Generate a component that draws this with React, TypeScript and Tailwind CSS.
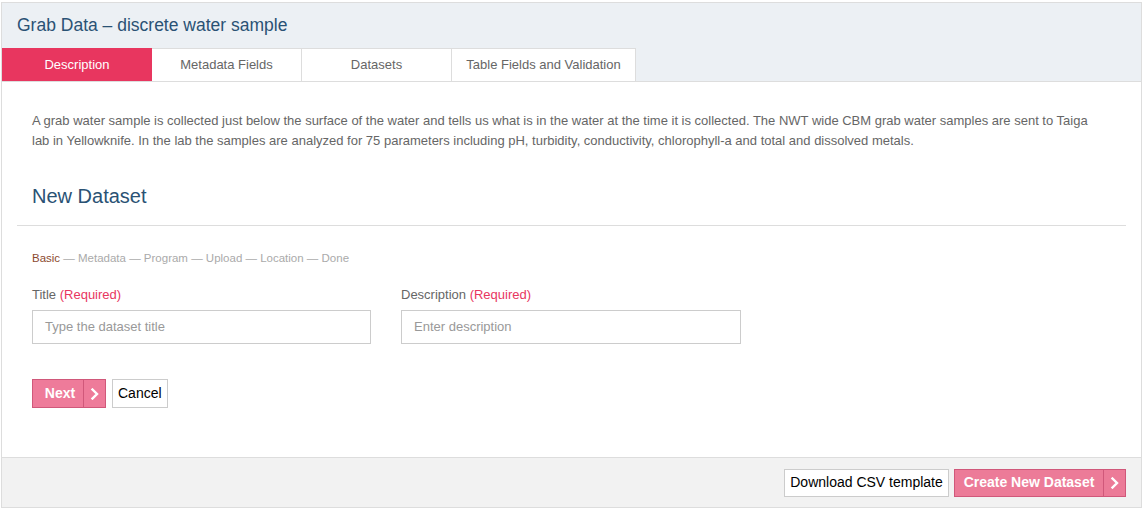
import React from "react";

const Chevron = () => (
  <svg width="10" height="12" viewBox="0 0 10 12" fill="none">
    <path d="M2.5 1.5 L7 6 L2.5 10.5" stroke="white" strokeWidth="2.4" strokeLinecap="square" />
  </svg>
);

export default function App() {
  const font = { fontFamily: '"Liberation Sans", Arial, sans-serif' };
  return (
    <div className="w-[1143px] h-[509px] bg-white pt-[2px] px-[1px]" style={font}>
      <div className="w-[1141px] h-[506px] border border-[#dddddd] flex flex-col">
        <div className="bg-[#ecf0f4] h-[79px] flex flex-col">
          <div className="h-[45px] flex items-center pl-[15px] text-[17.5px] text-[#2a5274]">
            Grab Data – discrete water sample
          </div>
          <div className="flex h-[34px] border-b border-[#dddddd]">
            <div className="w-[150px] bg-[#e8365f] text-white text-[13px] flex items-center justify-center">Description</div>
            <div className="w-[150px] bg-white border-r border-t border-[#dddddd] text-[#666] text-[13px] flex items-center justify-center">Metadata Fields</div>
            <div className="w-[150px] bg-white border-r border-t border-[#dddddd] text-[#666] text-[13px] flex items-center justify-center">Datasets</div>
            <div className="w-[184px] bg-white border-r border-t border-[#dddddd] text-[#666] text-[13px] flex items-center justify-center">Table Fields and Validation</div>
          </div>
        </div>
        <div className="flex-1 bg-white px-[15px] pt-[29px]">
          <p className="pl-[15px] pr-[35px] text-[13px] leading-[20px] text-[#666]">
            A grab water sample is collected just below the surface of the water and tells us what is in the water at the time it is collected. The NWT wide CBM grab water samples are sent to Taiga lab in Yellowknife. In the lab the samples are analyzed for 75 parameters including pH, turbidity, conductivity, chlorophyll-a and total and dissolved metals.
          </p>
          <h2 className="px-[15px] mt-[31px] text-[20px] leading-[28px] text-[#2a5274] font-normal">New Dataset</h2>
          <div className="mt-[15px] border-t border-[#dddddd]" />
          <div className="px-[15px] mt-[24px] text-[11.5px] leading-[16px] text-[#aaaaaa]">
            <span className="text-[#8b4a2f]">Basic</span> — Metadata — Program — Upload — Location — Done
          </div>
          <div className="px-[15px] mt-[21px] flex gap-[30px]">
            <div className="w-[339px]">
              <div className="text-[13px] leading-[16px] text-[#666]">Title <span className="text-[#e8365f]">(Required)</span></div>
              <div className="mt-[7px] h-[34px] border border-[#cccccc] flex items-center px-[12px] text-[13px] text-[#999]">Type the dataset title</div>
            </div>
            <div className="w-[340px]">
              <div className="text-[13px] leading-[16px] text-[#666]">Description <span className="text-[#e8365f]">(Required)</span></div>
              <div className="mt-[7px] h-[34px] border border-[#cccccc] flex items-center px-[12px] text-[13px] text-[#999]">Enter description</div>
            </div>
          </div>
          <div className="px-[15px] mt-[35px] flex gap-[6px]">
            <div className="h-[29px] flex bg-[#ee7b9a] border border-[#d0587a] text-white text-[14px] font-bold">
              <div className="w-[50px] flex items-center justify-center pl-[4px]">Next</div>
              <div className="w-[22px] border-l border-[#d0587a] flex items-center justify-center"><Chevron /></div>
            </div>
            <div className="h-[29px] px-[5px] flex items-center border border-[#cccccc] text-[14px] text-black">Cancel</div>
          </div>
        </div>
        <div className="h-[50px] bg-[#f2f2f2] border-t border-[#dddddd] flex items-center justify-end pr-[15px] gap-[5px]">
          <div className="h-[28px] w-[165px] bg-white border border-[#cccccc] flex items-center justify-center text-[14px] text-black">Download CSV template</div>
          <div className="h-[28px] flex bg-[#ec7b98] border border-[#d0587a] text-white text-[14px] font-bold">
            <div className="w-[148px] flex items-center justify-center">Create New Dataset</div>
            <div className="w-[22px] border-l border-[#d0587a] flex items-center justify-center"><Chevron /></div>
          </div>
        </div>
      </div>
    </div>
  );
}
